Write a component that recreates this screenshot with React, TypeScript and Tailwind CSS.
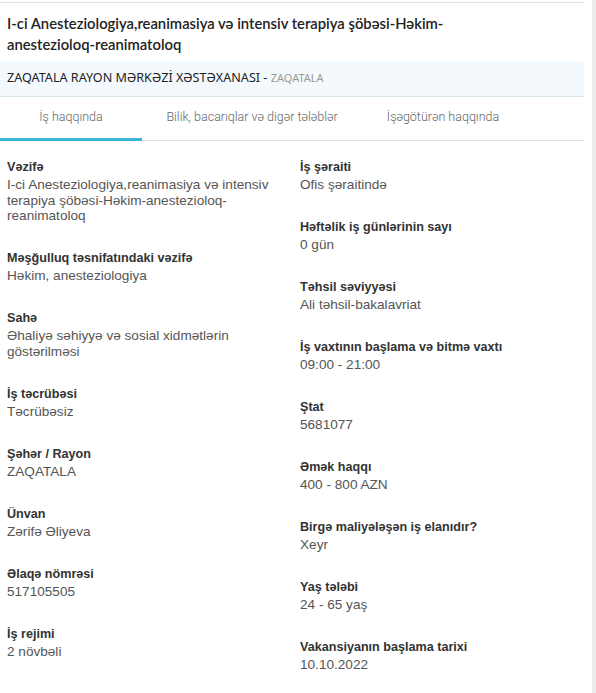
import React, { useState } from "react";

const leftItems = [
    { label: "Vəzifə", value: "I-ci Anesteziologiya,reanimasiya və intensiv terapiya şöbəsi-Həkim-anestezioloq-reanimatoloq" },
    { label: "Məşğulluq təsnifatındaki vəzifə", value: "Həkim, anesteziologiya" },
    { label: "Sahə", value: "Əhaliyə səhiyyə və sosial xidmətlərin göstərilməsi" },
    { label: "İş təcrübəsi", value: "Təcrübəsiz" },
    { label: "Şəhər / Rayon", value: "ZAQATALA" },
    { label: "Ünvan", value: "Zərifə Əliyeva" },
    { label: "Əlaqə nömrəsi", value: "517105505" },
    { label: "İş rejimi", value: "2 növbəli" },
];

const rightItems = [
    { label: "İş şəraiti", value: "Ofis şəraitində" },
    { label: "Həftəlik iş günlərinin sayı", value: "0 gün" },
    { label: "Təhsil səviyyəsi", value: "Ali təhsil-bakalavriat" },
    { label: "İş vaxtının başlama və bitmə vaxtı", value: "09:00 - 21:00" },
    { label: "Ştat", value: "5681077" },
    { label: "Əmək haqqı", value: "400 - 800 AZN" },
    { label: "Birgə maliyələşən iş elanıdır?", value: "Xeyr" },
    { label: "Yaş tələbi", value: "24 - 65 yaş" },
    { label: "Vakansiyanın başlama tarixi", value: "10.10.2022" },
];

const tabs = [
    { id: 1, name: "İş haqqında", w: "w-[142px]" },
    { id: 2, name: "Bilik, bacarıqlar və digər tələblər", w: "w-[220px]" },
    { id: 3, name: "İşəgötürən haqqında", w: "w-[162px]" },
];

const Item = ({ label, value }: { label: string; value: string }) => (
    <div className="mb-[24.5px]">
        <p className="text-[12.6px] leading-[20px] font-bold text-[#333]">{label}</p>
        <p className="text-[13.6px] leading-[15.5px] text-[#555]">{value}</p>
    </div>
);

const App = () => {
    const [activeTab, setActiveTab] = useState<number>(1);
    return (
        <div className="flex bg-white min-h-[693px]">
            <div className="w-[584px] pt-[2px]">
                <div className="border-t border-[#d8e4ec]">
                    <h1 className="px-[7px] pt-[10px] pb-[6px] text-[14.8px] leading-[21px] font-semibold text-[#222]" style={{ fontFamily: 'Lato, "Noto Sans", sans-serif' }}>
                        I-ci Anesteziologiya,reanimasiya və intensiv terapiya şöbəsi-Həkim-<span className="whitespace-nowrap">anestezioloq-reanimatoloq</span>
                    </h1>
                    <div className="h-[36px] flex items-center px-[7px] bg-[#f4f9fd] border-b border-[#d8e4ec] text-[12.6px] text-[#222]" style={{ fontFamily: '"Noto Sans", sans-serif' }}>
                        ZAQATALA RAYON MƏRKƏZİ XƏSTƏXANASI -&nbsp;<span className="text-[11px] text-[#999]">ZAQATALA</span>
                    </div>

                    <div className="flex border-b border-[#e2e2e2]" style={{ fontFamily: "Roboto, sans-serif" }}>
                        {tabs.map((tab) => (
                            <div
                                key={tab.id}
                                onClick={() => setActiveTab(tab.id)}
                                className={`${tab.w} h-[44px] flex items-center justify-center text-[12.5px] font-light text-[#666] border-b-[3px] -mb-px ${activeTab === tab.id ? "border-[#3cb6d8]" : "border-transparent"}`}
                            >
                                {tab.name}
                            </div>
                        ))}
                    </div>

                    <div className="grid grid-cols-[293px_1fr] px-[7px] pt-[16px]" style={{ fontFamily: '"Liberation Sans", Arial, sans-serif' }}>
                        <div className="pr-[20px]">
                            {leftItems.map((item) => (
                                <Item key={item.label} label={item.label} value={item.value} />
                            ))}
                        </div>
                        <div>
                            {rightItems.map((item) => (
                                <Item key={item.label} label={item.label} value={item.value} />
                            ))}
                        </div>
                    </div>
                </div>
            </div>
            <div className="flex-1" />
            <div className="w-[4px] bg-[#ececec]" />
        </div>
    );
};

export default App;
